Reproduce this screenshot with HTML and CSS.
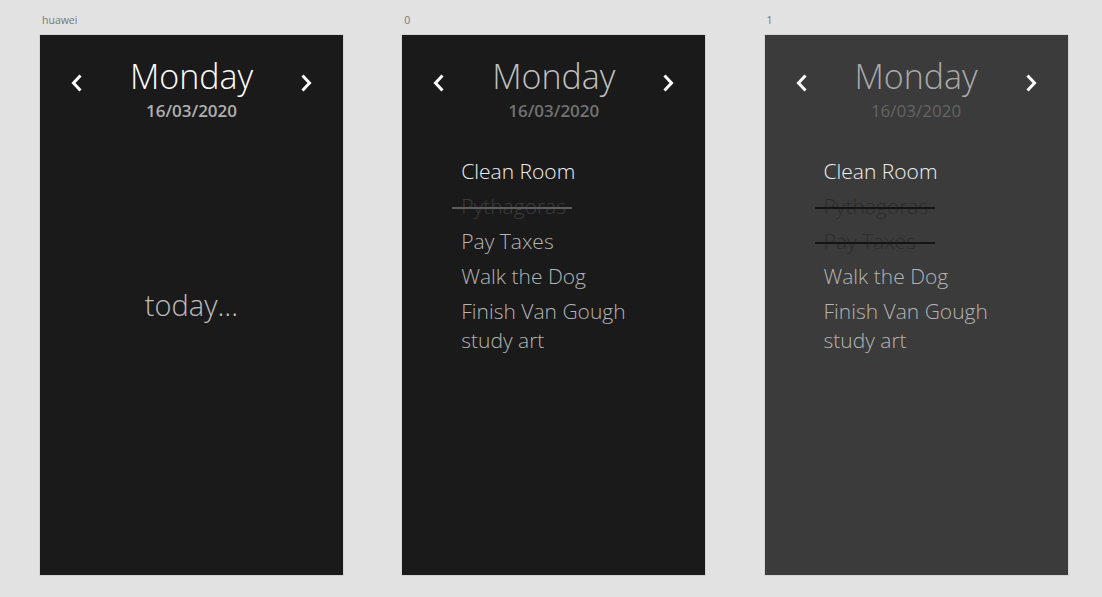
FILE: index.html
```html
<!DOCTYPE html>
<html lang="en">
<head>
<meta charset="utf-8">
<title>Day screens</title>
<link rel="stylesheet" href="styles.css">
</head>
<body>
<main class="canvas">
  <section class="board">
    <div class="label">huawei</div>
    <div class="screen screen-dark">
      <div class="head">
        <svg class="chev" viewBox="0 0 11 18" width="11" height="18"><path d="M9.5 1.5 L2.5 9 L9.5 16.5"/></svg>
        <div class="day day-white">Monday</div>
        <svg class="chev" viewBox="0 0 11 18" width="11" height="18"><path d="M1.5 1.5 L8.5 9 L1.5 16.5"/></svg>
      </div>
      <div class="date date-light">16/03/2020</div>
      <div class="empty">today...</div>
    </div>
  </section>

  <section class="board">
    <div class="label">0</div>
    <div class="screen screen-dark">
      <div class="head">
        <svg class="chev" viewBox="0 0 11 18" width="11" height="18"><path d="M9.5 1.5 L2.5 9 L9.5 16.5"/></svg>
        <div class="day day-grey">Monday</div>
        <svg class="chev" viewBox="0 0 11 18" width="11" height="18"><path d="M1.5 1.5 L8.5 9 L1.5 16.5"/></svg>
      </div>
      <div class="date date-mid">16/03/2020</div>
      <ul class="tasks">
        <li class="task task-first">Clean Room</li>
        <li class="task done done-dark">Pythagoras</li>
        <li class="task">Pay Taxes</li>
        <li class="task">Walk the Dog</li>
        <li class="task">Finish Van Gough study art</li>
      </ul>
    </div>
  </section>

  <section class="board">
    <div class="label">1</div>
    <div class="screen screen-grey">
      <div class="head">
        <svg class="chev" viewBox="0 0 11 18" width="11" height="18"><path d="M9.5 1.5 L2.5 9 L9.5 16.5"/></svg>
        <div class="day day-dim">Monday</div>
        <svg class="chev" viewBox="0 0 11 18" width="11" height="18"><path d="M1.5 1.5 L8.5 9 L1.5 16.5"/></svg>
      </div>
      <div class="date date-dim">16/03/2020</div>
      <ul class="tasks">
        <li class="task task-first">Clean Room</li>
        <li class="task done done-grey">Pythagoras</li>
        <li class="task done done-grey">Pay Taxes</li>
        <li class="task">Walk the Dog</li>
        <li class="task">Finish Van Gough study art</li>
      </ul>
    </div>
  </section>
</main>
</body>
</html>
```

FILE: styles.css
```css
html, body {
  margin: 0;
  padding: 0;
}

body {
  background: #e2e2e2;
  font-family: "Open Sans", "Liberation Sans", sans-serif;
  width: 1102px;
  height: 597px;
  overflow: hidden;
}

.canvas {
  display: flex;
  gap: 57.25px;
  padding: 13px 0 0 39px;
}

.board {
  display: flex;
  flex-direction: column;
}

.label {
  font-size: 10.5px;
  line-height: 14px;
  height: 14px;
  color: #777;
  padding-left: 3px;
  margin-bottom: 7px;
}

.screen {
  width: 303px;
  height: 540px;
  border: 1px solid #d3d3d3;
  display: flex;
  flex-direction: column;
  box-sizing: content-box;
}

.screen-dark { background: #1a1a1a; }
.screen-grey { background: #3b3b3b; }

.head {
  display: flex;
  justify-content: space-between;
  align-items: flex-start;
  padding: 19px 31px 0 31px;
}

.chev {
  margin-top: 20px;
  display: block;
}

.chev path {
  fill: none;
  stroke: #ffffff;
  stroke-width: 3;
  stroke-linecap: butt;
  stroke-linejoin: miter;
}

.day {
  font-weight: 300;
  font-size: 34px;
  line-height: 44px;
}

.day-white { color: #ffffff; }
.day-grey { color: #bfbfbf; }
.day-dim { color: #a9a9a9; }

.date {
  text-align: center;
  font-weight: 600;
  font-size: 17px;
  line-height: 24px;
  margin-top: 1px;
}

.date-light { color: #b0b0b0; }
.date-mid { color: #727272; }
.date-dim { color: #646464; font-weight: 400; }

.empty {
  margin-top: 163px;
  text-align: center;
  font-weight: 300;
  font-size: 29px;
  line-height: 38px;
  color: #bdbdbd;
}

.tasks {
  list-style: none;
  margin: 34px 0 0 0;
  padding: 0 60px 0 59px;
  display: flex;
  flex-direction: column;
  gap: 6px;
}

.task {
  font-weight: 300;
  font-size: 21px;
  line-height: 29px;
  color: #b4b4b4;
}

.task-first { color: #f0f0f0; }

.done {
  position: relative;
}

.done::after {
  content: "";
  position: absolute;
  left: -9px;
  width: 120px;
  top: 15px;
  height: 2px;
}

.done-dark { color: #3c3c3c; }
.done-dark::after { background: #5c5c5c; }

.done-grey { color: #2c2c2c; }
.done-grey::after { background: #141414; }
```
